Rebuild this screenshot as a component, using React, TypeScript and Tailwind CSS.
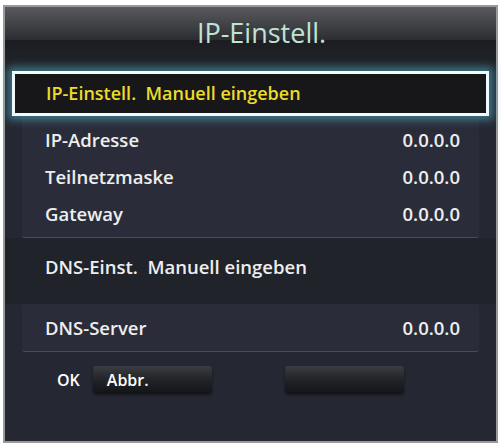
const font = { fontFamily: '"Open Sans", "Noto Sans", sans-serif' };

type Row = { label: string; value: string };

const ipRows: Row[] = [
  { label: "IP-Adresse", value: "0.0.0.0" },
  { label: "Teilnetzmaske", value: "0.0.0.0" },
  { label: "Gateway", value: "0.0.0.0" },
];

function Button({ label }: { label?: string }) {
  return (
    <div className="flex h-[27px] w-[119px] items-center rounded-[3px] bg-gradient-to-b from-[#3c3d42] via-[#232428] to-[#141518] pl-[14px] text-[16px] font-semibold text-white shadow-[0_2px_3px_rgba(0,0,0,0.5)]">
      {label}
    </div>
  );
}

export default function App() {
  return (
    <div className="h-[445px] w-[501px] bg-white pl-[3px] pt-[5px]" style={font}>
      <div className="flex h-[438px] w-[495px] flex-col border-2 border-[#9a9a9c] bg-[#252833]">
        <div className="flex h-[64px] justify-center bg-[linear-gradient(to_bottom,#595a5e_0px,#2c2d32_33px,#1c1d21_33px,#23252d_64px)] pl-[22px] pt-[6px] text-[27px] leading-[40px] text-[#bfe4d4]">
          IP-Einstell.
        </div>
        <div className="relative z-10 mx-[7px] flex h-[45px] items-center border-[3px] border-[#eefafc] bg-[#17171a] pl-[31px] text-[18px] font-semibold text-[#ecdc2a] shadow-[0_0_8px_4px_rgba(80,180,200,0.55)]">
          IP-Einstell.&nbsp; Manuell eingeben
        </div>
        <div className="mx-[17px] flex flex-col rounded-b-[3px] border-b border-[#4a4d58] bg-[#2a2d39] pb-[5px] pl-[23px] pr-[19px] pt-[5px] text-[18.5px] font-semibold text-[#eeeeee]">
          {ipRows.map((r) => (
            <div key={r.label} className="flex h-[37px] items-center justify-between">
              <span>{r.label}</span>
              <span>{r.value}</span>
            </div>
          ))}
        </div>
        <div className="h-[66px] bg-[#21232b] pl-[40px] pt-[18px] text-[18.5px] font-semibold leading-[22px] text-[#eeeeee]">
          DNS-Einst.&nbsp; Manuell eingeben
        </div>
        <div className="mx-[17px] flex h-[48px] items-center justify-between rounded-[3px] border-b border-[#4a4d58] bg-[#2a2d39] pl-[23px] pr-[19px] text-[18.5px] font-semibold text-[#eeeeee]">
          <span>DNS-Server</span>
          <span>0.0.0.0</span>
        </div>
        <div className="mt-[14px] flex items-center pl-[52px]">
          <span className="mr-[13px] text-[16px] font-semibold text-white">OK</span>
          <Button label="Abbr." />
          <div className="w-[73px]" />
          <Button />
        </div>
      </div>
    </div>
  );
}
